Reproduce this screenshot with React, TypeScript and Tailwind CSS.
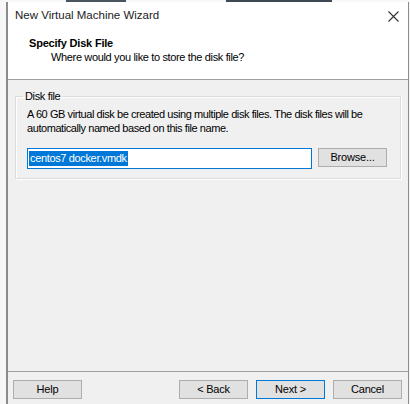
import React from 'react';

const btn =
  'h-[19px] w-[69px] bg-[#e1e1e1] border border-[#adadad] text-[11px] tracking-[-0.2px] text-black flex items-center justify-center leading-none';

const App: React.FC = () => {
  return (
    <div className="w-[410px] h-[404px] bg-[#f7f7f7] flex flex-col overflow-hidden font-['Liberation_Sans',Arial,sans-serif] text-[11px] tracking-[-0.35px] text-black">
      {/* strip of the desktop behind */}
      <div className="h-[2px] flex">
        <div className="w-[66px]" />
        <div className="w-[60px] bg-[#4a5560]" />
        <div className="w-[100px]" />
        <div className="w-[106px] bg-[#3d4853]" />
      </div>

      <div className="ml-[6px] w-[403px] flex-1 flex flex-col border-l-2 border-r border-[#8c8c8c] bg-[#f0f0f0]">
        {/* Title bar */}
        <div className="h-[28px] bg-white flex items-center justify-between pl-[7px] pr-[9px]">
          <span className="text-[11.5px] tracking-normal text-[#222]">New Virtual Machine Wizard</span>
          <svg width="11" height="11" viewBox="0 0 11 11">
            <path d="M0.5 0.5 L10.5 10.5 M10.5 0.5 L0.5 10.5" stroke="#333" strokeWidth="1.1" />
          </svg>
        </div>

        {/* Header */}
        <div className="h-[50px] bg-white border-b border-[#a0a0a0] pl-[21px] pt-[6px]">
          <div className="font-bold leading-[14px] tracking-[-0.2px]">Specify Disk File</div>
          <div className="pl-[22px] leading-[14px]">Where would you like to store the disk file?</div>
        </div>

        {/* Body */}
        <div className="flex-1 px-[7px] pt-[9px]">
          <fieldset className="border border-[#dcdcdc] shadow-[inset_1px_1px_0_#fff,1px_1px_0_#fff] pl-[11px] pr-[11px] pb-[9px]">
            <legend className="px-[2px] ml-[-4px] leading-[14px]">Disk file</legend>
            <p className="leading-[14px] mt-[4px] whitespace-nowrap tracking-[-0.43px]">
              A 60 GB virtual disk be created using multiple disk files. The disk files will be
              <br />
              automatically named based on this file name.
            </p>
            <div className="flex items-start mt-[13px] gap-[6px]">
              <div className="h-[21px] w-[285px] bg-white border border-[#0078d7] flex items-center pl-[1px]">
                <span className="bg-[#0078d7] text-white leading-[15px] px-[1px]">centos7 docker.vmdk</span>
              </div>
              <button className={btn}>Browse...</button>
            </div>
          </fieldset>
        </div>

        {/* Footer */}
        <div className="border-t border-[#a0a0a0] h-[33px] flex items-start pt-[8px] px-[5px]">
          <button className={btn}>Help</button>
          <div className="flex-1" />
          <div className="flex gap-[8px] mr-[1px]">
            <button className={btn}>&lt; Back</button>
            <button className={btn + ' !border-[#0078d7]'}>Next &gt;</button>
            <button className={btn}>Cancel</button>
          </div>
        </div>
      </div>
    </div>
  );
};

export default App;
